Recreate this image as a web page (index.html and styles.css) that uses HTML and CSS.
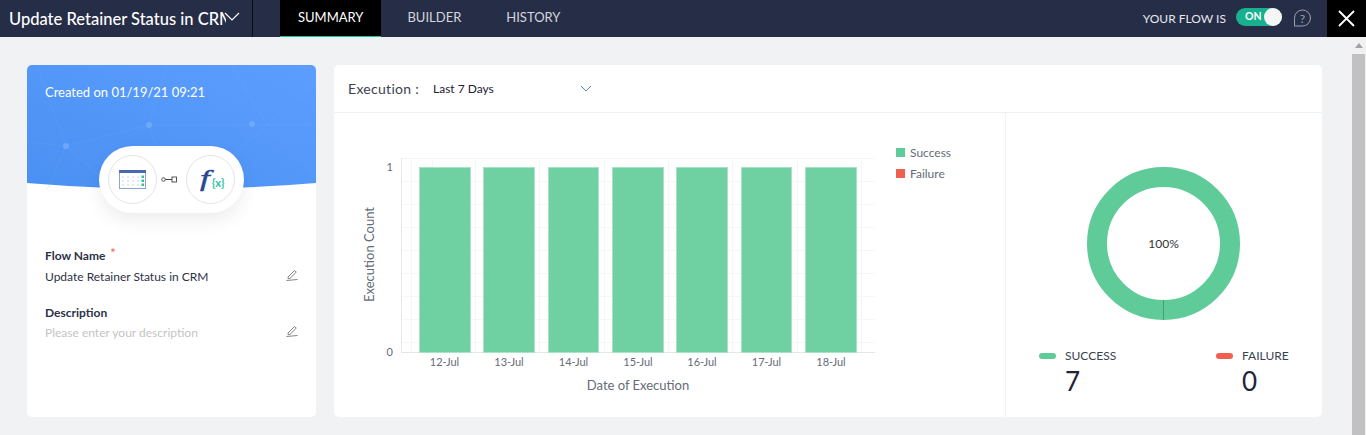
FILE: index.html
```html
<!DOCTYPE html>
<html lang="en">
<head>
    <meta charset="UTF-8">
    <title>Update Retainer Status in CRM - Summary</title>
    <link rel="stylesheet" href="styles.css">
</head>
<body>
    <header class="topbar">
        <div class="flow-select">
            <span class="flow-title">Update Retainer Status in CRM</span>
            <svg class="flow-caret" width="16" height="9" viewBox="0 0 16 9"><path d="M1 1l7 7 7-7" fill="none" stroke="#fff" stroke-width="1.2"/></svg>
        </div>
        <nav class="tabs">
            <a class="tab active">SUMMARY</a>
            <a class="tab">BUILDER</a>
            <a class="tab">HISTORY</a>
        </nav>
        <div class="flow-state">
            <span class="flow-state-label">YOUR FLOW IS</span>
            <div class="toggle"><span>ON</span><i class="knob"></i></div>
            <svg class="help" width="19" height="19" viewBox="0 0 19 19"><path d="M9.500 1a8 8 0 0 1 0 16H1.500V9.500A8 8 0 0 1 9.500 1z" fill="none" stroke="#9ea3b3" stroke-width="1"/><text x="9.500" y="13.500" text-anchor="middle" class="help-mark">?</text></svg>
        </div>
        <button class="close-btn" aria-label="Close">
            <svg width="17" height="17" viewBox="0 0 17 17"><path d="M1 1l15 15M16 1L1 16" stroke="#fff" stroke-width="1.8"/></svg>
        </button>
    </header>

    <div class="page">
        <main class="main">
            <aside class="info-card">
                <div class="info-head">
                    <svg class="info-bg" width="289" height="125" viewBox="0 0 289 125" preserveAspectRatio="none">
                        <defs>
                            <linearGradient id="blue" x1="0" y1="1" x2="1" y2="0">
                                <stop offset="0" stop-color="#4a90f2"/>
                                <stop offset="1" stop-color="#5c9eff"/>
                            </linearGradient>
                        </defs>
                        <path d="M0 0H289V118Q145 130 0 118Z" fill="url(#blue)"/>
                        <g stroke="#7fb3ff" stroke-width="0.6" fill="none" opacity="0.3">
                            <path d="M10 0L39 81L122 60L240 60L289 60M39 81L0 77M122 60L140 0M122 60L137 105M240 60L205 0M240 60L289 15M240 60L200 95M240 60L289 110M39 81L20 125M39 81L80 118"/>
                        </g>
                        <g fill="#7fb3ff" opacity="0.6">
                            <circle cx="39" cy="81" r="3"/>
                            <circle cx="122" cy="60" r="3"/>
                            <circle cx="225" cy="59" r="3"/>
                        </g>
                    </svg>
                    <p class="created">Created on 01/19/21 09:21</p>
                    <div class="flow-pill">
                        <span class="pill-icon">
                            <svg width="28" height="20" viewBox="0 0 28 20">
                                <rect x="0.500" y="0.500" width="26" height="18" fill="#fff" stroke="#8fa3cf"/>
                                <rect x="0" y="0" width="27" height="3" fill="#4a68b0"/>
                                <g fill="#b9c3d8">
                                    <circle cx="4" cy="7" r=".7"/><circle cx="9" cy="7" r=".7"/><circle cx="14" cy="7" r=".7"/><circle cx="19" cy="7" r=".7"/>
                                    <circle cx="4" cy="11" r=".7"/><circle cx="9" cy="11" r=".7"/><circle cx="14" cy="11" r=".7"/><circle cx="19" cy="11" r=".7"/>
                                    <circle cx="4" cy="15" r=".7"/><circle cx="9" cy="15" r=".7"/><circle cx="14" cy="15" r=".7"/><circle cx="19" cy="15" r=".7"/>
                                </g>
                                <g fill="#2ec4a0">
                                    <rect x="22.500" y="5.500" width="2.500" height="2.500"/><rect x="22.500" y="9.500" width="2.500" height="2.500"/><rect x="22.500" y="13.500" width="2.500" height="2.500"/>
                                </g>
                            </svg>
                        </span>
                        <svg class="pill-link" width="16" height="7" viewBox="0 0 16 7"><circle cx="2.500" cy="3.500" r="1.800" fill="#fff" stroke="#444" stroke-width="0.9"/><path d="M4.300 3.500H11" stroke="#444"/><rect x="11" y="1" width="4.500" height="5" fill="#fff" stroke="#444" stroke-width="0.9"/></svg>
                        <span class="pill-icon fx"><span class="fx-f">f</span><span class="fx-x">{x}</span></span>
                    </div>
                </div>
                <div class="field">
                    <label class="field-label">Flow Name <span class="req">*</span></label>
                    <div class="field-row">
                        <span>Update Retainer Status in CRM</span>
                        <svg class="edit" width="12" height="12" viewBox="0 0 12 12"><path d="M2 8L8.500 1.500l1.800 1.600L3.800 9.500H2zM0.500 11.500L11.500 10.500" fill="none" stroke="#80707a" stroke-width="0.9"/></svg>
                    </div>
                </div>
                <div class="field">
                    <label class="field-label">Description</label>
                    <div class="field-row placeholder">
                        <span>Please enter your description</span>
                        <svg class="edit" width="12" height="12" viewBox="0 0 12 12"><path d="M2 8L8.500 1.500l1.800 1.600L3.800 9.500H2zM0.500 11.500L11.500 10.500" fill="none" stroke="#80707a" stroke-width="0.9"/></svg>
                    </div>
                </div>
            </aside>

            <section class="panel">
                <div class="panel-head">
                    <span class="exec-label">Execution :</span>
                    <div class="range">
                        <span>Last 7 Days</span>
                        <svg width="12" height="7" viewBox="0 0 12 7"><path d="M1 1l5 5 5-5" fill="none" stroke="#4f8f9c" stroke-width="1"/></svg>
                    </div>
                </div>
                <div class="panel-body">
                    <div class="chart-wrap">
                        <svg class="chart" width="671" height="304" viewBox="0 0 671 304">
                            <g stroke="#f6f6f6" stroke-width="1">
                                <path d="M67 45.500H541M67 68.500H541M67 91.500H541M67 114.500H541M67 137.500H541M67 160.500H541M67 183.500H541M67 206.500H541M67 229.500H541"/>
                                <path d="M77.500 45V239M98.500 45V239M141.500 45V239M205.500 45V239M270.500 45V239M334.500 45V239M398.500 45V239M463.500 45V239M527.500 45V239"/>
                            </g>
                            <path d="M67.500 45V239.500H541" fill="none" stroke="#e6e6e6"/>
                            <g fill="#6fd1a2" stroke="#a9e3c6" stroke-width="1">
                                <rect x="85.500" y="54.500" width="51" height="185"/>
                                <rect x="149.500" y="54.500" width="51" height="185"/>
                                <rect x="214.500" y="54.500" width="50" height="185"/>
                                <rect x="278.500" y="54.500" width="51" height="185"/>
                                <rect x="342.500" y="54.500" width="51" height="185"/>
                                <rect x="407.500" y="54.500" width="50" height="185"/>
                                <rect x="471.500" y="54.500" width="51" height="185"/>
                            </g>
                            <g class="tick" text-anchor="end">
                                <text x="59" y="58">1</text>
                                <text x="59" y="243">0</text>
                            </g>
                            <g class="tick" text-anchor="middle">
                                <text x="110.500" y="253">12-Jul</text>
                                <text x="175" y="253">13-Jul</text>
                                <text x="239.500" y="253">14-Jul</text>
                                <text x="304" y="253">15-Jul</text>
                                <text x="368" y="253">16-Jul</text>
                                <text x="432.500" y="253">17-Jul</text>
                                <text x="497" y="253">18-Jul</text>
                            </g>
                            <text class="axis-title" x="304" y="277" text-anchor="middle">Date of Execution</text>
                            <text class="axis-title" transform="translate(40 141.500) rotate(-90)" text-anchor="middle">Execution Count</text>
                            <rect x="562" y="35" width="9" height="9" fill="#5fcb98"/>
                            <text class="legend-text" x="576" y="44">Success</text>
                            <rect x="562" y="56" width="9" height="9" fill="#f0604f"/>
                            <text class="legend-text" x="576" y="65">Failure</text>
                        </svg>
                    </div>
                    <div class="donut-wrap">
                        <svg class="donut" width="316" height="212" viewBox="0 0 316 212">
                            <circle cx="157.500" cy="130.500" r="66.500" fill="none" stroke="#5fcb98" stroke-width="20"/>
                            <path d="M157.500 187V207" stroke="#4c9c78" stroke-width="1"/>
                            <text class="donut-text" x="157.500" y="135" text-anchor="middle">100%</text>
                        </svg>
                        <div class="stats">
                            <div class="stat">
                                <div class="stat-name"><i class="dot dot-ok"></i>SUCCESS</div>
                                <div class="stat-value">7</div>
                            </div>
                            <div class="stat">
                                <div class="stat-name"><i class="dot dot-fail"></i>FAILURE</div>
                                <div class="stat-value">0</div>
                            </div>
                        </div>
                    </div>
                </div>
            </section>
        </main>
        <div class="scrollbar">
            <span class="scroll-arrow"></span>
            <span class="scroll-thumb"></span>
        </div>
    </div>
</body>
</html>
```

FILE: styles.css
```css
* { box-sizing: border-box; }
html, body { height: 100%; }
body { margin: 0; overflow: hidden; font-family: Lato, "Open Sans", sans-serif; background-color: #f1f2f4; color: #2c3247; display: flex; flex-direction: column; }

.topbar { height: 37px; flex: none; display: flex; align-items: stretch; background-color: #262d47; color: white; }
.flow-select { width: 253px; flex: none; position: relative; padding-left: 9px; border-right: 1px solid #0b0d16; display: flex; align-items: center; }
.flow-title { width: 217px; overflow: hidden; white-space: nowrap; font-size: 16.5px; font-weight: 500; }
.flow-caret { position: absolute; left: 224px; top: 12px; }
.tabs { display: flex; margin-left: 27px; }
.tab { padding: 0 18px 3px; display: flex; align-items: center; font-size: 13px; color: #d4d6de; }
.tab.active { background-color: #000; color: white; border-bottom: 1px solid #19c39a; padding-bottom: 2px; }
.tab + .tab { padding: 0 0 3px; margin-left: 45px; }
.tab.active + .tab { margin-left: 26px; }
.flow-state { margin-left: auto; display: flex; align-items: center; padding-bottom: 1px; }
.flow-state-label { font-size: 12px; color: #e6e8ee; }
.toggle { width: 46px; height: 18px; margin-left: 10px; border-radius: 9px; background-color: #19b08f; position: relative; font-size: 10.5px; font-weight: 700; line-height: 17px; padding-left: 9px; margin-bottom: 2px; }
.knob { position: absolute; right: 0; top: 0; width: 18px; height: 18px; border-radius: 50%; background-color: #f5f5f5; }
.help { margin-left: 11px; }
.help-mark { font-size: 12px; fill: #9ea3b3; }
.close-btn { width: 39px; margin-left: 15px; border: none; padding: 0; background-color: #000; display: flex; align-items: center; justify-content: center; }

.page { flex: 1; display: flex; min-height: 0; }
.main { flex: 1; display: flex; gap: 18px; align-items: flex-start; padding: 28px 0 0 27px; }
.scrollbar { width: 15px; background-color: #f1f1f1; display: flex; flex-direction: column; align-items: center; }
.scroll-arrow { margin-top: 6px; border-left: 4px solid transparent; border-right: 4px solid transparent; border-bottom: 5px solid #a3a3a3; }
.scroll-thumb { flex: 1; width: 13px; margin-top: 6px; background-color: #c1c1c1; }

.info-card { width: 289px; height: 352px; border-radius: 5px; background-color: white; overflow: hidden; }
.info-head { height: 169px; position: relative; }
.info-bg { position: absolute; left: 0; top: 0; }
.created { position: relative; margin: 0; padding: 19px 0 0 18px; font-size: 13px; line-height: 16px; color: white; }
.flow-pill { position: absolute; left: 72px; top: 81px; width: 145px; height: 67px; border-radius: 34px; background-color: white; box-shadow: 0 8px 18px rgba(0,0,0,0.07); display: flex; align-items: center; justify-content: space-between; padding: 0 9px; }
.pill-icon { width: 49px; height: 49px; border-radius: 50%; border: 1px solid #e4e4e4; display: flex; align-items: center; justify-content: center; }
.pill-link { flex: none; margin-right: 6px; }
.fx { position: relative; }
.fx-f { font-family: "Liberation Serif", serif; font-style: italic; font-size: 28px; line-height: 1; color: #27488f; -webkit-text-stroke: 0.5px #27488f; margin: -4px 0 0 -12px; transform: scale(1.25, 0.85); }
.fx-x { position: absolute; left: 25px; top: 20px; font-size: 11px; font-weight: 700; color: #2ec4a0; }

.field { padding: 0 18px; margin-bottom: 20px; }
.field-label { display: block; font-size: 12px; font-weight: 700; line-height: 16px; color: #2c3247; margin-top: 14px; }
.req { color: #f0604f; font-weight: 400; font-size: 13px; line-height: 0; margin-left: 2px; vertical-align: 2px; }
.field-row { display: flex; justify-content: space-between; align-items: center; font-size: 12px; line-height: 16px; margin-top: 5px; }
.field-row .edit { flex: none; margin-top: -4px; }
.field-row.placeholder { color: #c4c4c4; margin-top: 4px; }

.panel { width: 988px; height: 352px; border-radius: 5px; background-color: white; display: flex; flex-direction: column; }
.panel-head { height: 48px; flex: none; display: flex; align-items: center; padding: 0 0 1px 14px; border-bottom: 1px solid #eef0f2; }
.exec-label { font-size: 14px; color: #3a3f52; letter-spacing: 0.3px; width: 85px; }
.range { width: 159px; display: flex; justify-content: space-between; align-items: center; font-size: 12px; color: #1d2133; }
.panel-body { flex: 1; display: flex; min-height: 0; }
.chart-wrap { width: 672px; flex: none; border-right: 1px solid #f2f3f5; }
.chart { display: block; }
.tick text { font-size: 11px; fill: #666b78; }
.axis-title { font-size: 13px; fill: #666b78; }
.legend-text { font-size: 12px; fill: #666b78; }
.donut-wrap { flex: 1; }
.donut { display: block; }
.donut-text { font-size: 12px; fill: #333; }
.stats { display: flex; padding: 24px 0 0 33px; }
.stat { width: 177px; padding-left: 26px; }
.stat-name { position: relative; font-size: 12px; line-height: 14px; color: #3a3f52; }
.dot { position: absolute; left: -26px; top: 4px; width: 17px; height: 6px; border-radius: 3px; }
.dot-ok { background-color: #5fcb98; }
.dot-fail { background-color: #f0604f; }
.stat-value { font-size: 26px; line-height: 30px; color: #1f2438; margin-top: 3px; }
```
